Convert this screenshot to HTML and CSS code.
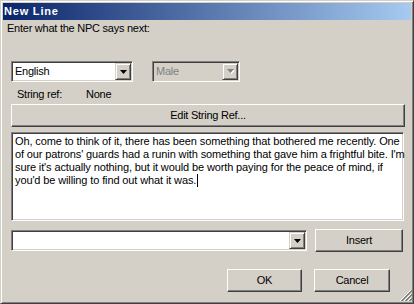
FILE: index.html
```html
<!DOCTYPE html>
<html>
<head>
<meta charset="utf-8">
<link rel="stylesheet" href="styles.css">
</head>
<body>
<div class="window">
  <div class="titlebar"><span class="title">New Line</span></div>
  <div class="prompt">Enter what the NPC says next:</div>
  <div class="row1">
    <div class="combo combo-lang">
      <div class="field">English</div>
      <div class="dropbtn"><svg width="7" height="4" viewBox="0 0 7 4"><polygon points="0,0 7,0 3.5,4" fill="#000"/></svg></div>
    </div>
    <div class="combo combo-gender disabled">
      <div class="field">Male</div>
      <div class="dropbtn"><svg width="8" height="5" viewBox="0 0 8 5"><polygon points="1,1 8,1 4.5,5" fill="#fff"/><polygon points="0,0 7,0 3.5,4" fill="#808080"/></svg></div>
    </div>
  </div>
  <div class="strref"><span class="strref-label">String ref:</span><span>None</span></div>
  <div class="button btn-edit">Edit String Ref...</div>
  <div class="textarea">
    <div class="tline">Oh, come to think of it, there has been something that bothered me recently. One</div>
    <div class="tline">of our patrons' guards had a runin with something that gave him a frightful bite. I'm</div>
    <div class="tline">sure it's actually nothing, but it would be worth paying for the peace of mind, if</div>
    <div class="tline">you'd be willing to find out what it was.<span class="caret"></span></div>
  </div>
  <div class="row3">
    <div class="combo combo-insert">
      <div class="field"></div>
      <div class="dropbtn"><svg width="7" height="4" viewBox="0 0 7 4"><polygon points="0,0 7,0 3.5,4" fill="#000"/></svg></div>
    </div>
    <div class="button btn-insert">Insert</div>
  </div>
  <div class="row4">
    <div class="button btn-ok">OK</div>
    <div class="button btn-cancel">Cancel</div>
  </div>
  <svg class="grip" width="12" height="12" viewBox="0 0 12 12">
    <g stroke-width="1" shape-rendering="crispEdges">
      <line x1="11" y1="0" x2="0" y2="11" stroke="#fff"/>
      <line x1="12" y1="0" x2="1" y2="11" stroke="#808080"/>
      <line x1="12" y1="1" x2="2" y2="11" stroke="#808080"/>
      <line x1="11" y1="4" x2="4" y2="11" stroke="#fff"/>
      <line x1="12" y1="4" x2="5" y2="11" stroke="#808080"/>
      <line x1="12" y1="5" x2="6" y2="11" stroke="#808080"/>
      <line x1="11" y1="8" x2="8" y2="11" stroke="#fff"/>
      <line x1="12" y1="8" x2="9" y2="11" stroke="#808080"/>
      <line x1="12" y1="9" x2="10" y2="11" stroke="#808080"/>
    </g>
  </svg>
</div>
</body>
</html>
```

FILE: styles.css
```css
html, body {
  margin: 0;
  padding: 0;
  background: #d4d0c8;
}
body {
  font-family: "Liberation Sans", Arial, sans-serif;
  font-size: 11px;
  color: #000;
}
.window {
  position: relative;
  width: 414px;
  height: 304px;
  box-sizing: border-box;
  background: #d4d0c8;
  border: 1px solid;
  border-color: #d4d0c8 #404040 #404040 #d4d0c8;
  box-shadow: inset 1px 1px #fff, inset -1px -1px #808080;
  padding: 2px;
  display: flex;
  flex-direction: column;
  letter-spacing: -0.25px;
}
.titlebar {
  height: 17px;
  flex: none;
  background: linear-gradient(to right, #0a246a, #a6caf0);
  color: #fff;
  font-weight: bold;
  font-size: 11px;
  line-height: 17px;
  padding-left: 1px;
  letter-spacing: 0.8px;
}
.prompt {
  margin: 2px 0 0 4px;
  line-height: 13px;
  height: 13px;
}
.row1 {
  margin: 26px 0 0 8px;
  display: flex;
  gap: 19px;
  height: 21px;
}
.combo {
  box-sizing: border-box;
  height: 21px;
  border: 1px solid;
  border-color: #808080 #fff #fff #808080;
  box-shadow: inset 1px 1px #404040, inset -1px -1px #d4d0c8;
  background: #fff;
  padding: 2px;
  display: flex;
}
.combo .field {
  flex: 1;
  line-height: 15px;
  padding-left: 1px;
}
.combo.disabled {
  background: #d4d0c8;
}
.combo.disabled .field {
  color: #808080;
}
.dropbtn {
  width: 16px;
  box-sizing: border-box;
  margin: -1px -1px 0 0;
  height: 17px;
  border: 1px solid;
  border-color: #d4d0c8 #404040 #404040 #d4d0c8;
  box-shadow: inset 1px 1px #fff, inset -1px -1px #808080;
  background: #d4d0c8;
  display: flex;
  align-items: center;
  justify-content: center;
}
.dropbtn svg {
  display: block;
  margin-left: 1px;
}
.combo-lang { width: 122px; }
.combo-gender { width: 88px; }
.strref {
  margin: 6px 0 0 14px;
  line-height: 13px;
  height: 13px;
  display: flex;
}
.strref-label {
  width: 69px;
}
.button {
  box-sizing: border-box;
  height: 23px;
  border: 1px solid;
  border-color: #fff #404040 #404040 #fff;
  box-shadow: inset -1px -1px #808080, inset 1px 1px #d4d0c8;
  background: #d4d0c8;
  display: flex;
  align-items: center;
  justify-content: center;
  line-height: 13px;
}
.btn-edit {
  margin: 3px 0 0 8px;
  width: 394px;
}
.textarea {
  margin: 5px 0 0 8px;
  width: 393px;
  height: 89px;
  box-sizing: border-box;
  border: 1px solid;
  border-color: #808080 #fff #fff #808080;
  box-shadow: inset 1px 1px #404040, inset -1px -1px #d4d0c8;
  background: #fff;
  padding: 2px 2px 0 3px;
  line-height: 13px;
  letter-spacing: -0.12px;
}
.tline {
  white-space: nowrap;
  height: 13px;
}
.caret {
  display: inline-block;
  width: 1px;
  height: 13px;
  background: #000;
  vertical-align: top;
  margin-left: 1px;
}
.row3 {
  margin: 8px 0 0 8px;
  display: flex;
  align-items: center;
  height: 23px;
}
.combo-insert { width: 296px; }
.btn-insert {
  margin-left: 8px;
  width: 88px;
}
.row4 {
  margin: 17px 0 0 224px;
  display: flex;
  gap: 12px;
}
.btn-ok { width: 75px; }
.btn-cancel { width: 76px; }
.grip {
  position: absolute;
  right: 1px;
  bottom: 1px;
}
```
